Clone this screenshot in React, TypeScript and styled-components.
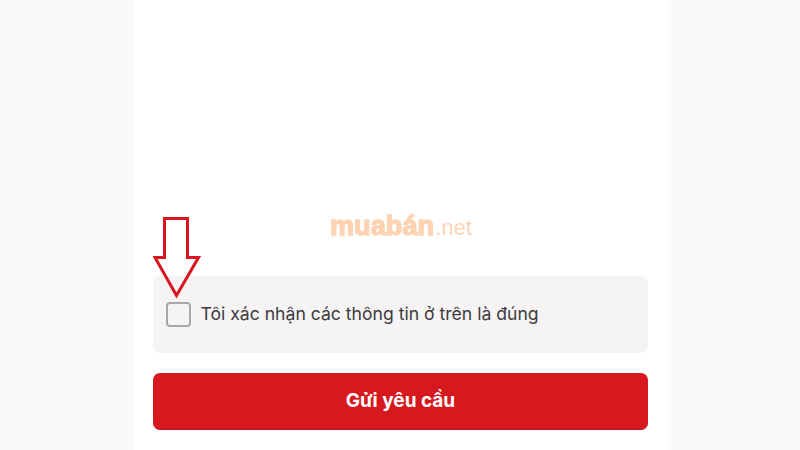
import { createGlobalStyle, styled } from 'styled-components';

const GlobalStyle = createGlobalStyle`
  html, body {
    margin: 0;
    padding: 0;
    background: #fafafa;
    font-family: Inter, 'Liberation Sans', sans-serif;
  }
`;

const App = () => (
  <>
    <GlobalStyle />
    <Page>
      <Sheet>
        <Watermark>
          <WatermarkBrand>muabán</WatermarkBrand>
          <WatermarkTld>.net</WatermarkTld>
        </Watermark>
        <Arrow viewBox="0 0 48 82" fill="none">
          <path
            d="M11.5 1.5H34.5V40.5H45.5L23.5 78.5L2 40.5H11.5Z"
            stroke="#d9161f"
            strokeWidth="3"
            strokeLinejoin="miter"
          />
        </Arrow>
        <ConfirmPanel>
          <Checkbox />
          <ConfirmLabel>Tôi xác nhận các thông tin ở trên là đúng</ConfirmLabel>
        </ConfirmPanel>
        <SubmitButton>Gửi yêu cầu</SubmitButton>
      </Sheet>
    </Page>
  </>
);

const Page = styled.div`
  width: 800px;
  height: 450px;
  overflow: hidden;
  display: flex;
  justify-content: center;
  background: #fafafa;
`;

const Sheet = styled.div`
  position: relative;
  width: 535px;
  margin-left: 1px;
  box-sizing: border-box;
  padding: 276px 20px 0;
  background: #fff;
  display: flex;
  flex-direction: column;
  gap: 20px;
`;

const Watermark = styled.div`
  position: absolute;
  left: 197px;
  top: 211px;
  display: flex;
  align-items: baseline;
  color: #fdd3b4;
  filter: blur(0.4px);
`;

const WatermarkBrand = styled.span`
  font-family: 'Liberation Sans', sans-serif;
  font-size: 27px;
  font-weight: 700;
  letter-spacing: 0.1px;
  -webkit-text-stroke: 1.5px #fdd3b4;
`;

const WatermarkTld = styled.span`
  font-family: 'Liberation Sans', sans-serif;
  font-size: 22px;
  font-weight: 400;
  margin-left: 1px;
`;

const Arrow = styled.svg`
  position: absolute;
  left: 20px;
  top: 217px;
  width: 48px;
  height: 82px;
`;

const ConfirmPanel = styled.div`
  height: 77px;
  box-sizing: border-box;
  padding: 0 13px 1px;
  display: flex;
  align-items: center;
  gap: 10px;
  background: #f5f3f4;
  border-radius: 7px;
`;

const Checkbox = styled.div`
  width: 25px;
  height: 25px;
  box-sizing: border-box;
  border: 2px solid #a9a8a9;
  border-radius: 4px;
`;

const ConfirmLabel = styled.span`
  font-size: 17.6px;
  color: #3d3b3c;
  white-space: nowrap;
  margin-left: -0.5px;
  margin-top: -1px;
`;

const SubmitButton = styled.button`
  height: 57px;
  border: none;
  border-bottom: 1px solid #b81a20;
  border-radius: 7px;
  padding: 0 0 2px;
  background: #d7181f;
  color: #fff;
  font-family: Inter, 'Liberation Sans', sans-serif;
  font-size: 19px;
  font-weight: 700;
`;

export default App;
